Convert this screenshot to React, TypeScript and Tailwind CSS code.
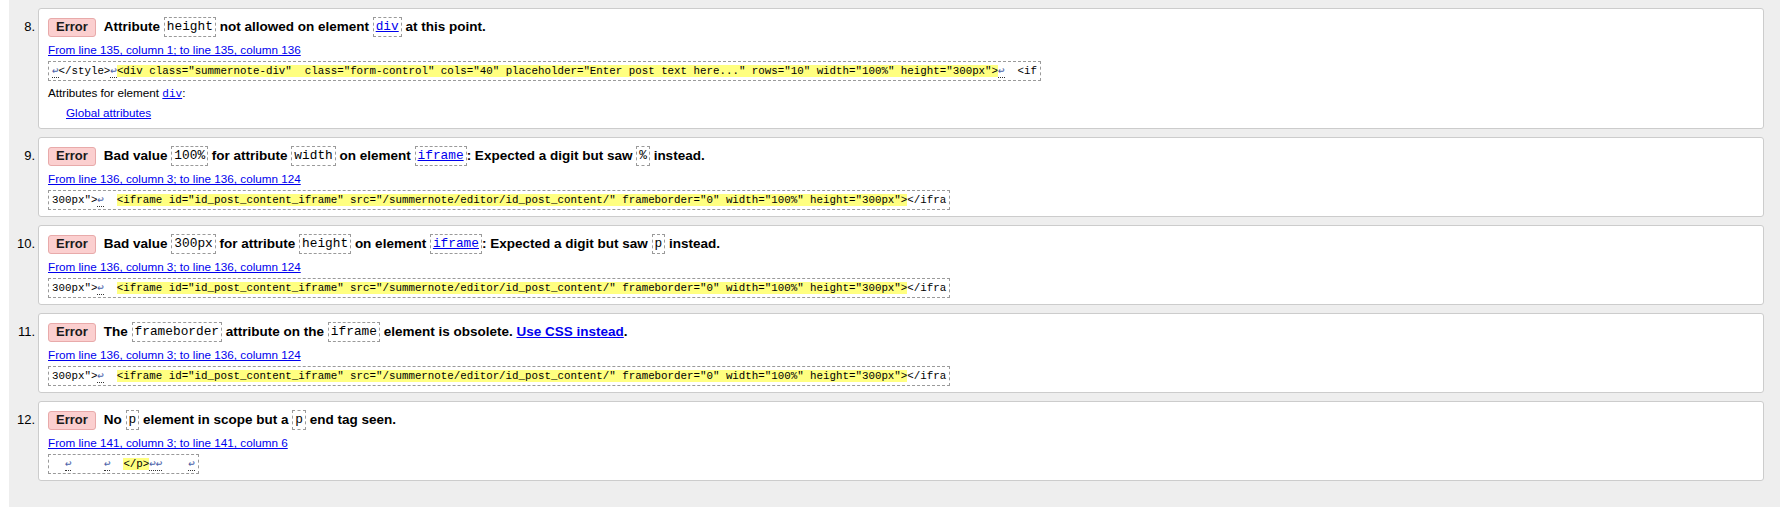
import React from "react";

type Part = string | { code: string; link?: boolean } | { bold: string; link?: boolean };

type Seg = { t: string; hl?: boolean; lf?: boolean };

type Message = {
  n: number;
  title: Part[];
  from: string;
  extract: Seg[];
  extra?: boolean;
};

const messages: Message[] = [
  {
    n: 8,
    title: ["Attribute", { code: "height" }, "not allowed on element", { code: "div", link: true }, "at this point."],
    from: "From line 135, column 1; to line 135, column 136",
    extract: [
      { t: "↩", lf: true },
      { t: "</style>" },
      { t: "↩", lf: true },
      {
        t: '<div class="summernote-div"  class="form-control" cols="40" placeholder="Enter post text here..." rows="10" width="100%" height="300px">',
        hl: true,
      },
      { t: "↩", lf: true },
      { t: "  <if" },
    ],
    extra: true,
  },
  {
    n: 9,
    title: ["Bad value", { code: "100%" }, "for attribute", { code: "width" }, "on element", { code: "iframe", link: true }, ": Expected a digit but saw", { code: "%" }, "instead."],
    from: "From line 136, column 3; to line 136, column 124",
    extract: [],
  },
  {
    n: 10,
    title: ["Bad value", { code: "300px" }, "for attribute", { code: "height" }, "on element", { code: "iframe", link: true }, ": Expected a digit but saw", { code: "p" }, "instead."],
    from: "From line 136, column 3; to line 136, column 124",
    extract: [],
  },
  {
    n: 11,
    title: ["The", { code: "frameborder" }, "attribute on the", { code: "iframe" }, "element is obsolete.", { bold: "Use CSS instead", link: true }, "."],
    from: "From line 136, column 3; to line 136, column 124",
    extract: [],
  },
  {
    n: 12,
    title: ["No", { code: "p" }, "element in scope but a", { code: "p" }, "end tag seen."],
    from: "From line 141, column 3; to line 141, column 6",
    extract: [
      { t: "  " },
      { t: "↩", lf: true },
      { t: "     " },
      { t: "↩", lf: true },
      { t: "  " },
      { t: "</p>", hl: true },
      { t: "↩↩", lf: true },
      { t: "    " },
      { t: "↩", lf: true },
    ],
  },
];

const iframeExtract: Seg[] = [
  { t: '300px">' },
  { t: "↩", lf: true },
  { t: "  " },
  { t: '<iframe id="id_post_content_iframe" src="/summernote/editor/id_post_content/" frameborder="0" width="100%" height="300px">', hl: true },
  { t: "</ifra" },
];

const mono = "font-['Liberation_Mono','DejaVu_Sans_Mono',monospace]";

function Title({ parts }: { parts: Part[] }) {
  return (
    <span className="text-[13.5px] font-bold leading-[22px] text-black">
      {parts.map((p, i) => {
        if (typeof p === "string") {
          const lead = p.startsWith(":") || p === "." || i === 0 ? "" : " ";
          return (
            <span key={i}>
              {lead}
              {p}
            </span>
          );
        }
        if ("code" in p) {
          return (
            <span key={i}>
              {" "}
              <code
                className={`${mono} inline-block align-middle border border-dashed border-[#9a9a9a] px-[2px] text-[12.8px] font-normal leading-[18px] ${
                  p.link ? "text-[#0000ee] underline" : "text-black"
                }`}
              >
                {p.code}
              </code>
            </span>
          );
        }
        return (
          <span key={i}>
            {" "}
            <a className="text-[#0000ee] underline">{p.bold}</a>
          </span>
        );
      })}
    </span>
  );
}

function Extract({ segs }: { segs: Seg[] }) {
  return (
    <div className={`${mono} inline-block border border-dashed border-[#9a9a9a] px-[3px] text-[10.8px] leading-[18px] whitespace-pre text-black`}>
      {segs.map((s, i) =>
        s.lf ? (
          <span key={i} className="font-['DejaVu_Sans_Mono',monospace] text-[10.8px] text-[#4a5fa8] border-b border-dotted border-[#333]">
            {s.t}
          </span>
        ) : (
          <span key={i} className={s.hl ? "bg-[#ffff80]" : ""}>
            {s.t}
          </span>
        )
      )}
    </div>
  );
}

export default function App() {
  return (
    <div className="min-h-screen bg-white pl-[9px] font-['Liberation_Sans',Arial,sans-serif] text-black">
      <div className="bg-[#eeeeee] pt-2 pr-4 pb-[33px]">
        <ol className="flex flex-col gap-2">
          {messages.map((m) => (
            <li key={m.n} className="flex">
              <span className="w-[29px] shrink-0 pr-[3px] pt-[11px] text-right text-[13px] leading-[15px]">{m.n}.</span>
              <div className="flex-1 rounded-[3px] border border-[#cccccc] bg-white pl-[9px] pt-[7px] pb-[6px]">
                <div className="flex items-center">
                  <span className="mr-[8px] inline-flex h-[19px] items-center rounded-[3px] border border-[#e8aaaa] bg-[#fbcfcf] px-[7px] text-[13px] font-bold text-[#1a1a1a]">
                    Error
                  </span>
                  <Title parts={m.title} />
                </div>
                <div className="mt-[5px] text-[11.7px] leading-[14px]">
                  <a className="text-[#0000ee] underline">{m.from}</a>
                </div>
                <div className="mt-[4px] flex">
                  <Extract segs={m.extract.length ? m.extract : iframeExtract} />
                </div>
                {m.extra && (
                  <div className="text-[11.7px] leading-[14px]">
                    <div className="mt-[5px]">
                      Attributes for element <a className={`${mono} text-[11px] text-[#0000ee] underline`}>div</a>:
                    </div>
                    <div className="mt-[5px] pl-[18px] pb-[2px]">
                      <a className="text-[#0000ee] underline">Global attributes</a>
                    </div>
                  </div>
                )}
              </div>
            </li>
          ))}
        </ol>
      </div>
    </div>
  );
}
